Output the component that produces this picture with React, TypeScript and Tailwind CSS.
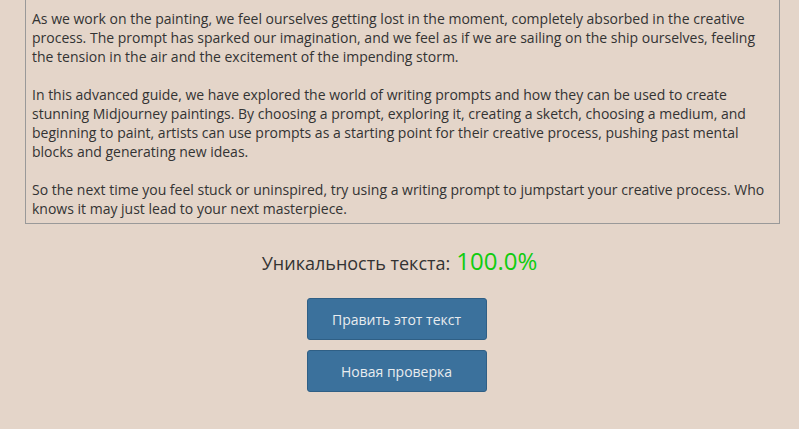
export default function App() {
  return (
    <div className="min-h-[429px] bg-[#e4d5c9] font-['Open_Sans',sans-serif] text-[#333]">
      <div className="ml-[25px] mr-[19px] border-x border-b border-[#999] px-[6px] pt-[9px] pb-[5px] text-[14px] leading-[19px]">
        <p>
          As we work on the painting, we feel ourselves getting lost in the moment, completely absorbed in the creative
          process. The prompt has sparked our imagination, and we feel as if we are sailing on the ship ourselves, feeling
          the tension in the air and the excitement of the impending storm.
        </p>
        <p className="mt-[19px]">
          In this advanced guide, we have explored the world of writing prompts and how they can be used to create
          stunning Midjourney paintings. By choosing a prompt, exploring it, creating a sketch, choosing a medium, and
          beginning to paint, artists can use prompts as a starting point for their creative process, pushing past mental
          blocks and generating new ideas.
        </p>
        <p className="mt-[19px]">
          So the next time you feel stuck or uninspired, try using a writing prompt to jumpstart your creative process. Who
          knows it may just lead to your next masterpiece.
        </p>
      </div>

      <div className="mt-[19px] flex items-baseline justify-center gap-[6px]">
        <span className="text-[18px]">Уникальность текста:</span>
        <span className="text-[24px] font-medium text-[#10cc10]">100.0%</span>
      </div>

      <div className="mt-[19px] flex flex-col items-center gap-[10px] pr-[6px]">
        <button className="h-[42px] w-[180px] rounded-[3px] border border-[#2f5f85] bg-[#3b719c] text-[14px] text-[#e8ecef]">
          Править этот текст
        </button>
        <button className="h-[42px] w-[180px] rounded-[3px] border border-[#2f5f85] bg-[#3b719c] text-[14px] text-[#e8ecef]">
          Новая проверка
        </button>
      </div>
    </div>
  );
}
